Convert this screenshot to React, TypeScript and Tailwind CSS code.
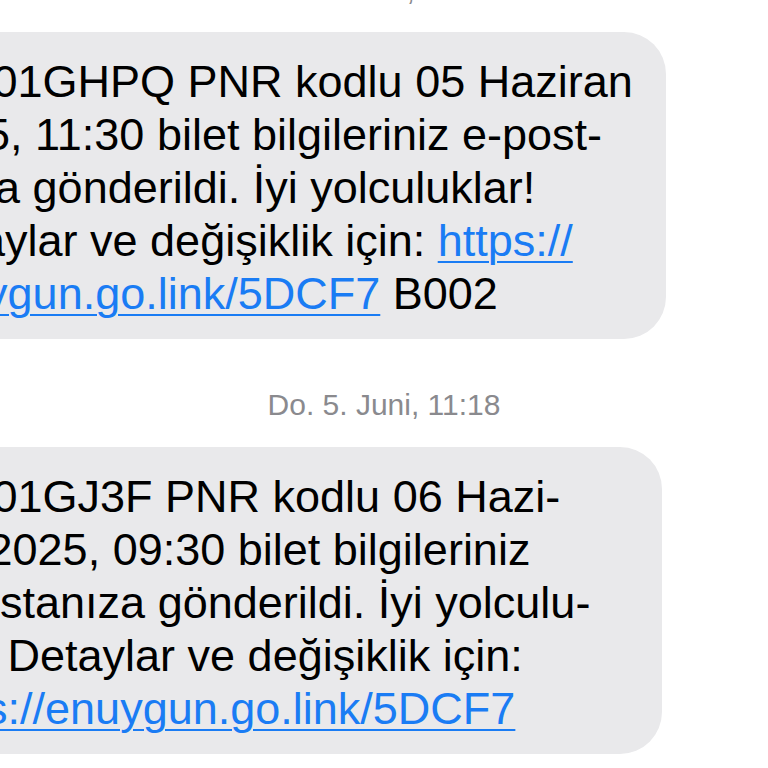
import React from 'react';

type Piece = { text: string; link?: boolean };
type Line = Piece[];

const LINK = 'https://enuygun.go.link/5DCF7';

const messages: { time: string; lines: Line[] }[] = [
  {
    time: 'Mi. 4. Juni, 16:42',
    lines: [
      [{ text: 'FTT01GHPQ PNR kodlu 05 Haziran' }],
      [{ text: '2025, 11:30 bilet bilgileriniz e-post-' }],
      [{ text: 'anıza gönderildi. İyi yolculuklar!' }],
      [{ text: 'Detaylar ve değişiklik için: ' }, { text: 'https://', link: true }],
      [{ text: 'enuygun.go.link/5DCF7', link: true }, { text: ' B002' }],
    ],
  },
  {
    time: 'Do. 5. Juni, 11:18',
    lines: [
      [{ text: 'FTT01GJ3F PNR kodlu 06 Hazi-' }],
      [{ text: 'ran 2025, 09:30 bilet bilgileriniz' }],
      [{ text: 'e-postanıza gönderildi. İyi yolculu-' }],
      [{ text: 'klar! Detaylar ve değişiklik için:' }],
      [{ text: 'https://enuygun.go.link/5DCF7', link: true }],
    ],
  },
];

// bubbles run off the left edge of the shot, like the cropped screenshot
const Bubble: React.FC<{ lines: Line[]; wide?: boolean }> = ({ lines, wide }) => (
  <div
    className={`${wide ? 'w-[794px]' : 'w-[790px]'} -ml-[128px] rounded-[42px] bg-[#e9e9eb] pl-[38px] pt-[23px] pb-[19px] text-[45px] leading-[53px] text-black`}
  >
    {lines.map((line, i) => (
      <div key={i} className="whitespace-nowrap">
        {line.map((p, j) =>
          p.link ? (
            <a
              key={j}
              href={LINK}
              className="text-[#1a7cf4] underline decoration-2 underline-offset-[5px]"
            >
              {p.text}
            </a>
          ) : (
            <span key={j}>{p.text}</span>
          )
        )}
      </div>
    ))}
  </div>
);

const App: React.FC = () => {
  return (
    <div
      className="h-[768px] w-[768px] overflow-hidden bg-white"
      style={{ fontFamily: '"Liberation Sans", Arial, sans-serif' }}
    >
      <div className="-mt-[28px] flex flex-col">
        {messages.map((m, i) => (
          <div key={i} className="flex flex-col">
            <div className={`${i === 0 ? '' : 'mt-[48px]'} text-center text-[30px] leading-[36px] text-[#8a8a8e]`}>
              {m.time}
            </div>
            <div className="mt-[24px]">
              <Bubble lines={m.lines} wide={i === 0} />
            </div>
          </div>
        ))}
      </div>
    </div>
  );
};

export default App;
